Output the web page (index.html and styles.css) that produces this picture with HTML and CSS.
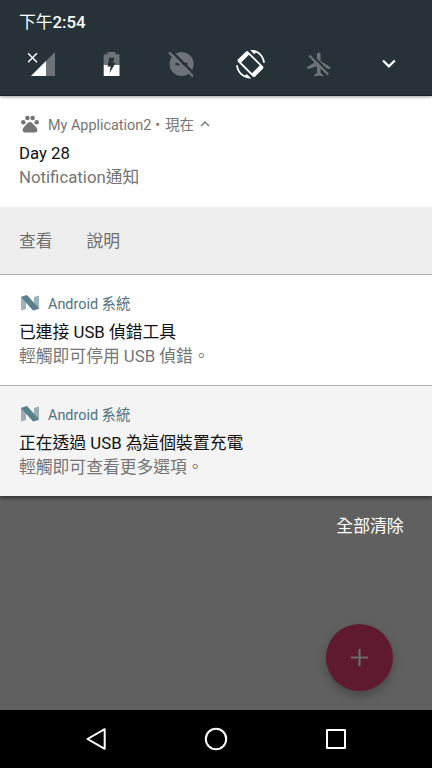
FILE: index.html
```
<!DOCTYPE html>
<html lang="zh-Hant">
<head>
    <meta charset="UTF-8">
    <meta name="viewport" content="width=device-width, initial-scale=1.0">
    <title>Notifications</title>
    <link rel="stylesheet" href="styles.css">
</head>
<body>
    <div class="screen">
        <header class="quick-panel">
            <div class="clock">下午<b>2:54</b></div>
            <div class="tiles">
                <!-- no signal -->
                <svg class="tile" viewBox="0 0 29 29">
                    <path d="M27 2V26H3z" fill="#6d7376"/>
                    <path d="M18 11V26H3z" fill="#fff"/>
                    <path d="M0 3.3l9 9M9 3.3l-9 9" stroke="#fff" stroke-width="1.5"/>
                </svg>
                <!-- battery charging -->
                <svg class="tile" viewBox="0 0 29 29">
                    <path d="M10.5 2h8v2.2h4V15H6.7V4.2h3.8z" fill="#6d7376"/>
                    <path d="M6.7 15h15.8v11H6.7z" fill="#fff"/>
                    <path d="M12.3 7.8h5.4l-2 5h3l-6.3 10.4 1.3-6.7h-3.2z" fill="#263238"/>
                </svg>
                <!-- do not disturb off -->
                <svg class="tile" viewBox="0 0 29 29">
                    <circle cx="14.6" cy="14" r="12" fill="#6d7376"/>
                    <path d="M8.5 14h12" stroke="#263238" stroke-width="2.4"/>
                    <path d="M3.5 .2l24 24" stroke="#263238" stroke-width="2.4"/>
                    <path d="M2 2.4l24 24" stroke="#6d7376" stroke-width="2.2"/>
                </svg>
                <!-- auto rotate -->
                <svg class="tile" viewBox="0 0.4 24 24">
                    <path fill="#fff" fill-rule="evenodd" d="M16.48 2.52c3.27 1.55 5.61 4.72 5.97 8.48h1.5C23.44 4.84 18.29 0 12 0l-.66.03 3.81 3.81 1.33-1.32zM10.23 1.75c-.59-.59-1.54-.59-2.12 0L1.75 8.11c-.59.59-.59 1.54 0 2.12l12.02 12.02c.59.59 1.54.59 2.12 0l6.36-6.36c.59-.59.59-1.54 0-2.12zM13.3 19.66L4.34 10.7 10.7 4.34 19.66 13.3zM7.52 21.48C4.25 19.94 1.91 16.76 1.55 13H.05C.56 19.16 5.71 24 12 24l.66-.03-3.81-3.81-1.33 1.32z"/>
                </svg>
                <!-- airplane mode off -->
                <svg class="tile" viewBox="0.1 0 24 24">
                    <path fill="#6d7376" d="M13 9V3.5C13 2.67 12.33 2 11.5 2S10 2.67 10 3.5v3.68l7.83 7.83L21 16v-2l-8-5zM3 5.27l4.99 4.99L2 14v2l8-2.5V19l-2 1.5V22l3.5-1 3.5 1v-1.5L13 19v-3.73L18.73 21 20 19.73 4.27 4 3 5.27z"/>
                </svg>
                <!-- expand -->
                <svg class="tile" viewBox="0 0 29 29">
                    <path d="M8 10.5l5.9 5.8 5.9-5.8" fill="none" stroke="#fff" stroke-width="2.3"/>
                </svg>
            </div>
        </header>

        <main class="notifications">
            <section class="card">
                <div class="app">
                    <svg class="app-icon paw" viewBox="0 0 20 20">
                        <circle cx="3.3" cy="8.3" r="2.3"/>
                        <circle cx="7.4" cy="4" r="2.3"/>
                        <circle cx="12.6" cy="4" r="2.3"/>
                        <circle cx="16.7" cy="8.3" r="2.3"/>
                        <path d="M10 8c1.700 0 2.800 1.500 3.900 2.800 1.400 1.600 3.500 3.100 3.500 5.100 0 1.500-1 2.500-2.500 2.500H5.100c-1.500 0-2.500-1-2.500-2.500 0-2 2.100-3.500 3.500-5.100C7.200 9.500 8.300 8 10 8z"/>
                    </svg>
                    <span>My Application2<span class="dot">•</span>現在</span>
                    <svg class="collapse" viewBox="0 0 10 10">
                        <path d="M1 7l4-4 4 4" fill="none" stroke="#757575" stroke-width="1.4"/>
                    </svg>
                </div>
                <div class="title">Day 28</div>
                <div class="text">Notification通知</div>
            </section>
            <div class="actions">
                <span>查看</span>
                <span>說明</span>
            </div>

            <section class="card system">
                <div class="app">
                    <svg class="app-icon" viewBox="0 0 20 20">
                        <path d="M1 4l5-1.5V16L1 17.500zM14 4l5-1.500V16l-5 1.500z" opacity=".6"/>
                        <path d="M1 4l6-2L19 15.300l-6 2.200z"/>
                    </svg>
                    <span>Android 系統</span>
                </div>
                <div class="title">已連接 USB 偵錯工具</div>
                <div class="text">輕觸即可停用 USB 偵錯。</div>
            </section>

            <section class="card system low">
                <div class="app">
                    <svg class="app-icon" viewBox="0 0 20 20">
                        <path d="M1 4l5-1.500V16L1 17.500zM14 4l5-1.500V16l-5 1.500z" opacity=".6"/>
                        <path d="M1 4l6-2L19 15.300l-6 2.200z"/>
                    </svg>
                    <span>Android 系統</span>
                </div>
                <div class="title">正在透過 USB 為這個裝置充電</div>
                <div class="text">輕觸即可查看更多選項。</div>
            </section>
        </main>

        <div class="backdrop">
            <div class="clear-all">全部清除</div>
            <div class="fab">
                <svg width="19" height="19" viewBox="0 0 19 19">
                    <path d="M9.5 1v17M1 9.5h17" stroke="#6b6b6b" stroke-width="2.2"/>
                </svg>
            </div>
        </div>

        <nav class="nav-bar">
            <svg width="28" height="28" viewBox="0 0 28 28">
                <path d="M22.7 4.2v19.6L5.5 14z"/>
            </svg>
            <svg width="28" height="28" viewBox="0 0 28 28">
                <circle cx="14" cy="14" r="10.2"/>
            </svg>
            <svg width="28" height="28" viewBox="0 0 28 28">
                <path d="M5 5h18v18H5z"/>
            </svg>
        </nav>
    </div>
</body>
</html>
```

FILE: styles.css
```
* {
    box-sizing: border-box;
}

body {
    margin: 0;
    font-family: Roboto, "Noto Sans CJK TC", sans-serif;
    font-size: 16.8px;
    background-color: #000;
}

.screen {
    display: flex;
    flex-direction: column;
    height: 768px;
    overflow: hidden;
}

/* Status and quick settings */
.quick-panel {
    position: relative;
    z-index: 2;
    height: 96px;
    padding-top: 10px;
    background-color: #263238;
    border-bottom: 1px solid #17232a;
    box-shadow: 0 1px 3px rgba(0, 0, 0, 0.4);
    color: #fff;
}

.clock {
    height: 24px;
    padding-left: 19px;
    line-height: 24px;
}

.clock b {
    font-weight: 500;
}

.tiles {
    display: grid;
    grid-template-columns: repeat(6, 1fr);
    justify-items: center;
    padding: 0 8px;
    margin-top: 15.5px;
}

.tile {
    width: 29px;
    height: 29px;
}

/* Notification cards */
.notifications {
    position: relative;
    z-index: 1;
    box-shadow: 0 2px 4px rgba(0, 0, 0, 0.5);
}

.card {
    height: 111px;
    padding: 17px 19px 0;
    background-color: #fff;
}

.system {
    border-top: 1px solid #adadad;
}

.low {
    background-color: #f4f4f4;
}

.app {
    display: flex;
    align-items: center;
    height: 21px;
    margin-bottom: 8px;
    padding-left: 1px;
    font-size: 14.4px;
    color: #757575;
}

.system .app {
    color: #4f7380;
}

.app-icon {
    width: 20px;
    height: 20px;
    margin-right: 8px;
    fill: #757575;
}

.paw {
    margin-top: 1px;
}

.system .app-icon {
    fill: #5b7f8c;
}

.dot {
    margin: 0 5px 0 4px;
}

.collapse {
    width: 10px;
    height: 10px;
    margin: 1px 0 0 6px;
}

.title {
    height: 23px;
    line-height: 23px;
    color: #111;
}

.text {
    height: 24px;
    line-height: 24px;
    color: #757575;
}

.actions {
    display: flex;
    gap: 34px;
    height: 67px;
    padding-left: 19px;
    line-height: 69px;
    background-color: #eee;
    color: #707070;
}

/* Dimmed app behind the shade */
.backdrop {
    display: flex;
    flex: 1;
    flex-direction: column;
    align-items: flex-end;
    justify-content: space-between;
    padding: 18px 28.5px 19px 0;
    background-color: #606060;
}

.clear-all {
    line-height: 24px;
    color: #fff;
}

.fab {
    display: flex;
    align-items: center;
    justify-content: center;
    width: 67px;
    height: 67px;
    margin-right: 10.5px;
    border-radius: 50%;
    background-color: #5f1a2f;
    box-shadow: 0 5px 10px rgba(0, 0, 0, 0.25);
}

.nav-bar {
    display: flex;
    justify-content: center;
    gap: 92px;
    height: 58px;
    padding-top: 15px;
    background-color: #000;
}

.nav-bar svg {
    fill: none;
    stroke: #fff;
    stroke-width: 2;
    stroke-linejoin: round;
}
```
